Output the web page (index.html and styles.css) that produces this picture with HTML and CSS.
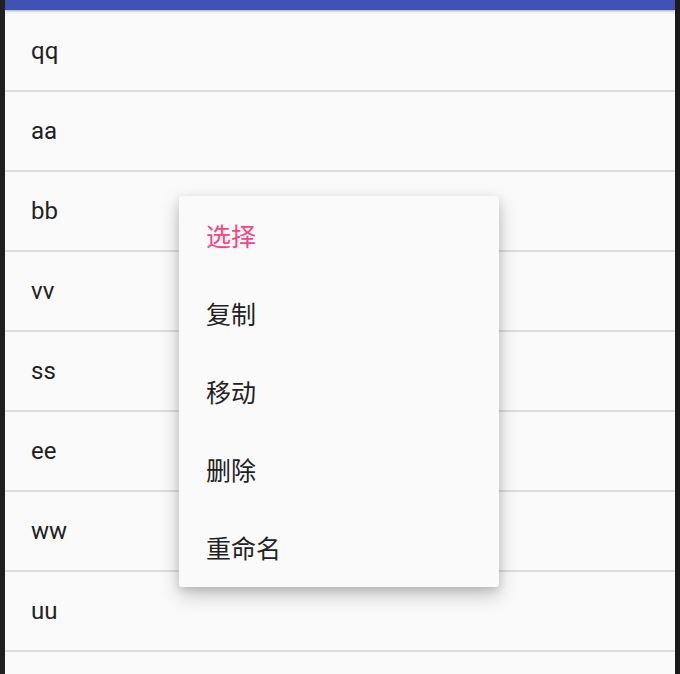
FILE: index.html
```html
<!DOCTYPE html>
<html lang="zh">
<head>
<meta charset="utf-8">
<link rel="stylesheet" href="styles.css">
</head>
<body>
<div class="screen">
  <div class="edge edge-left"></div>
  <div class="app">
    <div class="appbar"></div>
    <ul class="list">
      <li class="row">qq</li>
      <li class="row">aa</li>
      <li class="row">bb</li>
      <li class="row">vv</li>
      <li class="row">ss</li>
      <li class="row">ee</li>
      <li class="row">ww</li>
      <li class="row">uu</li>
      <li class="row"></li>
    </ul>
    <div class="menu">
      <div class="menu-item selected">选择</div>
      <div class="menu-item">复制</div>
      <div class="menu-item">移动</div>
      <div class="menu-item">删除</div>
      <div class="menu-item">重命名</div>
    </div>
  </div>
  <div class="edge edge-right"></div>
</div>
</body>
</html>
```
FILE: styles.css
```css
html, body {
  margin: 0;
  padding: 0;
  height: 100%;
  overflow: hidden;
  background: #fafafa;
}
.screen {
  display: flex;
  width: 680px;
  height: 674px;
  font-family: Roboto, "Noto Sans CJK SC", sans-serif;
}
.edge {
  flex: none;
  background: #202020;
}
.edge-left { width: 5px; }
.edge-right { width: 5px; background: #1a1a1a; }
.app {
  position: relative;
  flex: 1;
  background: #fafafa;
  overflow: hidden;
}
.appbar {
  position: relative;
  z-index: 2;
  height: 10px;
  background: #3f51b5;
  box-shadow: 0 1px 3px rgba(0, 0, 0, 0.35);
}
.list {
  list-style: none;
  margin: 0;
  padding: 2px 0 0;
}
.row {
  height: 78px;
  border-bottom: 2px solid #dcdcdc;
  display: flex;
  align-items: center;
  padding-left: 26px;
  font-size: 24px;
  color: #222;
}
.menu {
  position: absolute;
  left: 174px;
  top: 196px;
  width: 320px;
  padding: 1px 0 0;
  background: #fafafa;
  border-radius: 3px;
  box-shadow: 0 8px 20px rgba(0, 0, 0, 0.22), 0 3px 8px rgba(0, 0, 0, 0.12);
  z-index: 3;
}
.menu-item {
  box-sizing: border-box;
  height: 78px;
  display: flex;
  align-items: center;
  padding: 0 0 3px 27px;
  font-family: "Noto Sans CJK SC", sans-serif;
  font-size: 25px;
  color: #222;
}
.menu-item.selected {
  color: #ff4081;
}
```
